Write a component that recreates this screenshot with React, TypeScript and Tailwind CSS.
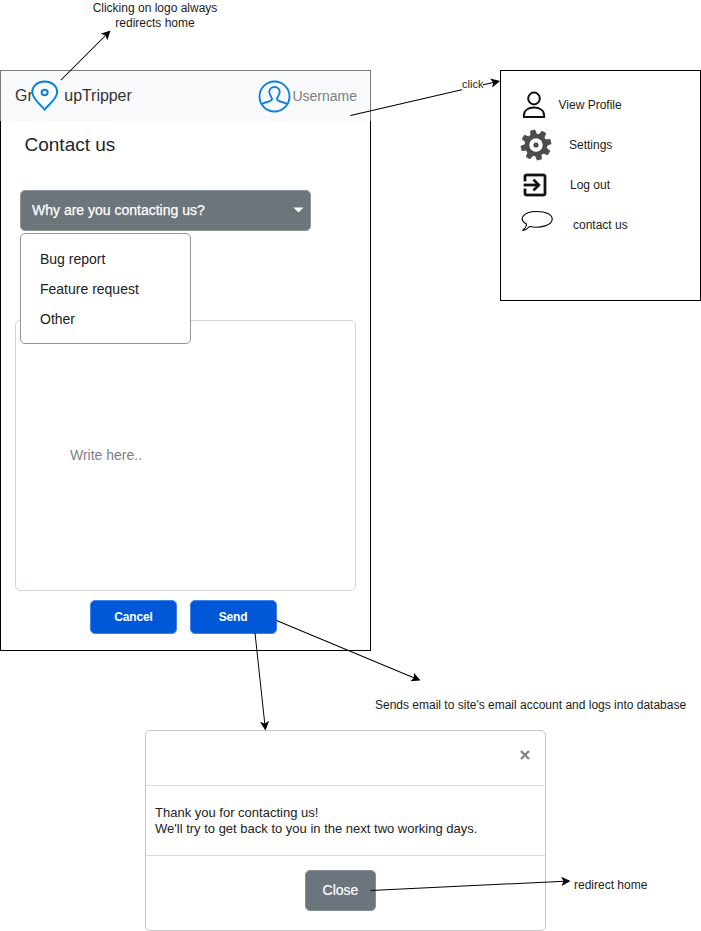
import type { ReactNode } from 'react';

function PinIcon() {
  return (
    <svg className="h-8 w-7 shrink-0" viewBox="0 0 28 32" fill="none" stroke="#0f80e0" strokeWidth="2">
      <path d="M13.600 29.600C10.500 25.500 1.300 19 1.300 12.200C1.300 6 6.500 1.600 13.600 1.600S26.100 6 26.100 12.200C26.100 19 16.700 25.500 13.600 29.600Z" fill="#fafcff" />
      <ellipse cx="13.600" cy="12.500" rx="3" ry="2.700" />
    </svg>
  );
}

function AvatarIcon() {
  return (
    <svg className="h-[33px] w-[33px] shrink-0" viewBox="0 0 33 33" fill="none" stroke="#0f80e0" strokeWidth="1.9">
      <circle cx="16.500" cy="16.500" r="15" />
      <path d="M3.500 24.200C6.500 21.500 14 22.200 14 19C14 17 11.300 15.500 11.300 11.800C11.300 9 13.500 7 16.500 7S21.700 9 21.700 11.800C21.700 15.500 19 17 19 19C19 22.200 26.500 21.500 29.500 24.200" />
    </svg>
  );
}

function ProfileIcon() {
  return (
    <svg className="h-[28px] w-[24px]" viewBox="0 0 24 28" fill="none" stroke="#111" strokeWidth="2">
      <ellipse cx="12" cy="7.500" rx="5.800" ry="5.900" />
      <path d="M1.900 26V24.500C1.900 19.500 6 16.600 12 16.600S22.100 19.500 22.100 24.500V26Z" />
    </svg>
  );
}

const teeth = [0, 45, 90, 135, 180, 225, 270, 315];

function GearIcon() {
  return (
    <svg className="h-8 w-8" viewBox="-16 -16 32 32" fill="#4d4d4d">
      <g transform="rotate(-13)">
        {teeth.map((a) => (
          <path key={a} d="M-3.400 -10L-2.500 -15.300H2.500L3.400 -10Z" transform={`rotate(${a})`} />
        ))}
      </g>
      <circle r="11.300" />
      <circle r="6.700" fill="#fff" />
      <circle r="2.600" />
    </svg>
  );
}

function ExitIcon() {
  return (
    <svg className="h-[30px] w-[30px]" viewBox="0 0 24 24" fill="#111" stroke="#111" strokeWidth="0.2">
      <path d="M10.090 15.590L11.500 17l5-5-5-5-1.410 1.410L12.670 11H3v2h9.670l-2.580 2.590zM19 3H5c-1.110 0-2 .9-2 2v4h2V5h14v14H5v-4H3v4c0 1.100.890 2 2 2h14c1.100 0 2-.9 2-2V5c0-1.100-.9-2-2-2z" />
    </svg>
  );
}

function BubbleIcon() {
  return (
    <svg className="h-[22px] w-[34px]" viewBox="0 0 34 22" fill="none" stroke="#000" strokeWidth="1.1">
      <path d="M6.500 14C-1.500 10.500 1.500 1.500 16.800 1.500C26 1.500 32.200 4.500 32.200 9.200C32.200 15 20.500 18.800 9.500 16.500C8 18.500 5.500 20 2.500 20.500C4.500 19 6.500 17 6.500 14Z" />
    </svg>
  );
}

function MenuRow({ icon, label, row, gap }: { icon: ReactNode; label: string; row: string; gap: string }) {
  return (
    <div className={`flex h-10 items-center ${row}`}>
      {icon}
      <span className={`text-xs ${gap}`}>{label}</span>
    </div>
  );
}

const arrows = [
  [61, 80, 110.5, 30.5],
  [350.5, 115.5, 500, 81],
  [276.5, 620.5, 420.5, 680.5],
  [255, 633, 265.5, 730.5],
  [370.5, 890.5, 570.5, 881],
];

function Connectors() {
  return (
    <svg className="pointer-events-none absolute top-0 left-0" width="701" height="931" stroke="#000" fill="#000">
      {arrows.map(([x1, y1, x2, y2]) => {
        const angle = (Math.atan2(y2 - y1, x2 - x1) * 180) / Math.PI;
        const length = Math.hypot(x2 - x1, y2 - y1);
        return (
          <g key={x1} transform={`translate(${x2} ${y2}) rotate(${angle})`}>
            <path d={`M${-length} 0H-6`} />
            <path d="M-1.100 0L-8.100 3.500L-6.400 0L-8.100 -3.500Z" />
          </g>
        );
      })}
    </svg>
  );
}

function Phone() {
  return (
    <section className="absolute top-[70px] left-0 flex h-[581px] w-[371px] flex-col border border-black bg-white">
      <header className="-mx-px -mt-px flex h-[51px] shrink-0 items-center border border-b-0 border-[#7b7c7d] bg-[#f8f9fb] pl-3.5 text-base text-[#333]">
        <span>Gr</span>
        <span className="-ml-[2px] flex"><PinIcon /></span>
        <span className="ml-[5.500px] tracking-[-0.05px]">upTripper</span>
        <span className="ml-auto flex"><AvatarIcon /></span>
        <span className="mr-[13px] ml-px text-sm text-[#7d7e80]">Username</span>
      </header>
      <h1 className="mt-2.5 ml-[23.500px] h-7 text-[19px] leading-7 text-[#212529]">Contact us</h1>
      <div className="relative z-10 mt-[31px] ml-[19px] w-[291px]">
        <button className="flex h-[41px] w-full items-center justify-between rounded-[5px] border border-[#8b9599] bg-[#6c757a] pr-1.5 pb-0.5 pl-[11px] text-sm text-white [-webkit-text-stroke:0.25px_white]">
          Why are you contacting us?
          <svg className="mt-px h-1.5 w-[11px]" viewBox="0 0 11 6" fill="#fff"><path d="M0.500 0.500H10.500L5.500 5.500Z" /></svg>
        </button>
        <ul className="absolute top-[43px] left-0 h-[111px] w-[171px] rounded-[5px] border border-[#929497] bg-white pt-2.5 pl-[19px] text-sm leading-[30px] text-[#212121]">
          <li>Bug report</li>
          <li>Feature request</li>
          <li>Other</li>
        </ul>
      </div>
      <div className="mt-[89px] ml-3.5 flex h-[271px] w-[341px] items-center rounded-[5px] border border-[#ced4da] pb-0.5 pl-[54px] text-sm text-[#7b8187]">
        Write here..
      </div>
      <div className="mt-[9px] ml-[89px] flex gap-[13px] text-xs font-bold tracking-[-0.15px] text-white">
        <button className="h-[34px] w-[87px] rounded-[5px] border border-[#3d83ea] bg-[#0057d8] pb-px">Cancel</button>
        <button className="h-[34px] w-[87px] rounded-[5px] border border-[#3d83ea] bg-[#0057d8] pr-px pb-px">Send</button>
      </div>
    </section>
  );
}

function UserMenu() {
  return (
    <section className="absolute top-[70px] left-[500px] h-[231px] w-[201px] border border-black bg-white pt-3.5">
      <MenuRow icon={<ProfileIcon />} label="View Profile" row="pl-[21px]" gap="ml-[12.500px]" />
      <MenuRow icon={<GearIcon />} label="Settings" row="pl-[19px]" gap="ml-[17px]" />
      <MenuRow icon={<ExitIcon />} label="Log out" row="pl-[19px]" gap="ml-[20px]" />
      <MenuRow icon={<span className="-mt-2"><BubbleIcon /></span>} label="contact us" row="pl-[19px]" gap="ml-[19px]" />
    </section>
  );
}

function Dialog() {
  return (
    <section className="absolute top-[730px] left-[145px] flex h-[201px] w-[401px] flex-col rounded-[5px] border border-[#c4c4c4] bg-white">
      <div className="flex h-[55px] items-start justify-end border-b border-[#dcdcdc] pt-[19px] pr-[15px]">
        <svg className="h-[10px] w-[10px]" viewBox="0 0 10 10" stroke="#858585" strokeWidth="2.400"><path d="M1 1L9 9M9 1L1 9" /></svg>
      </div>
      <p className="flex h-[70px] flex-col justify-center border-b border-[#dcdcdc] pl-[9px] text-[13px] leading-4 text-[#222]">
        <span>Thank you for contacting us!</span>
        <span>We'll try to get back to you in the next two working days.</span>
      </p>
      <div className="flex justify-center pt-3.5 pr-2.5">
        <button className="h-[41px] w-[71px] rounded-[5px] border border-[#868e94] bg-[#6c757d] pb-0.5 text-sm text-white [-webkit-text-stroke:0.2px_white]">Close</button>
      </div>
    </section>
  );
}

export default function App() {
  return (
    <main className="relative h-[931px] w-[701px] overflow-hidden bg-white font-['Liberation_Sans',Arial,sans-serif] text-[#1c1c1c]">
      <Phone />
      <UserMenu />
      <Dialog />
      <Connectors />
      <p className="absolute top-px left-[85px] w-[140px] text-center text-xs leading-[15px]">Clicking on logo always redirects home</p>
      <span className="absolute top-[78px] left-[462px] bg-white text-[11px] leading-[13px]">click</span>
      <p className="absolute top-[697px] left-[375px] text-xs whitespace-nowrap">Sends email to site's email account and logs into database</p>
      <p className="absolute top-[877px] left-[574px] text-xs whitespace-nowrap">redirect home</p>
    </main>
  );
}
